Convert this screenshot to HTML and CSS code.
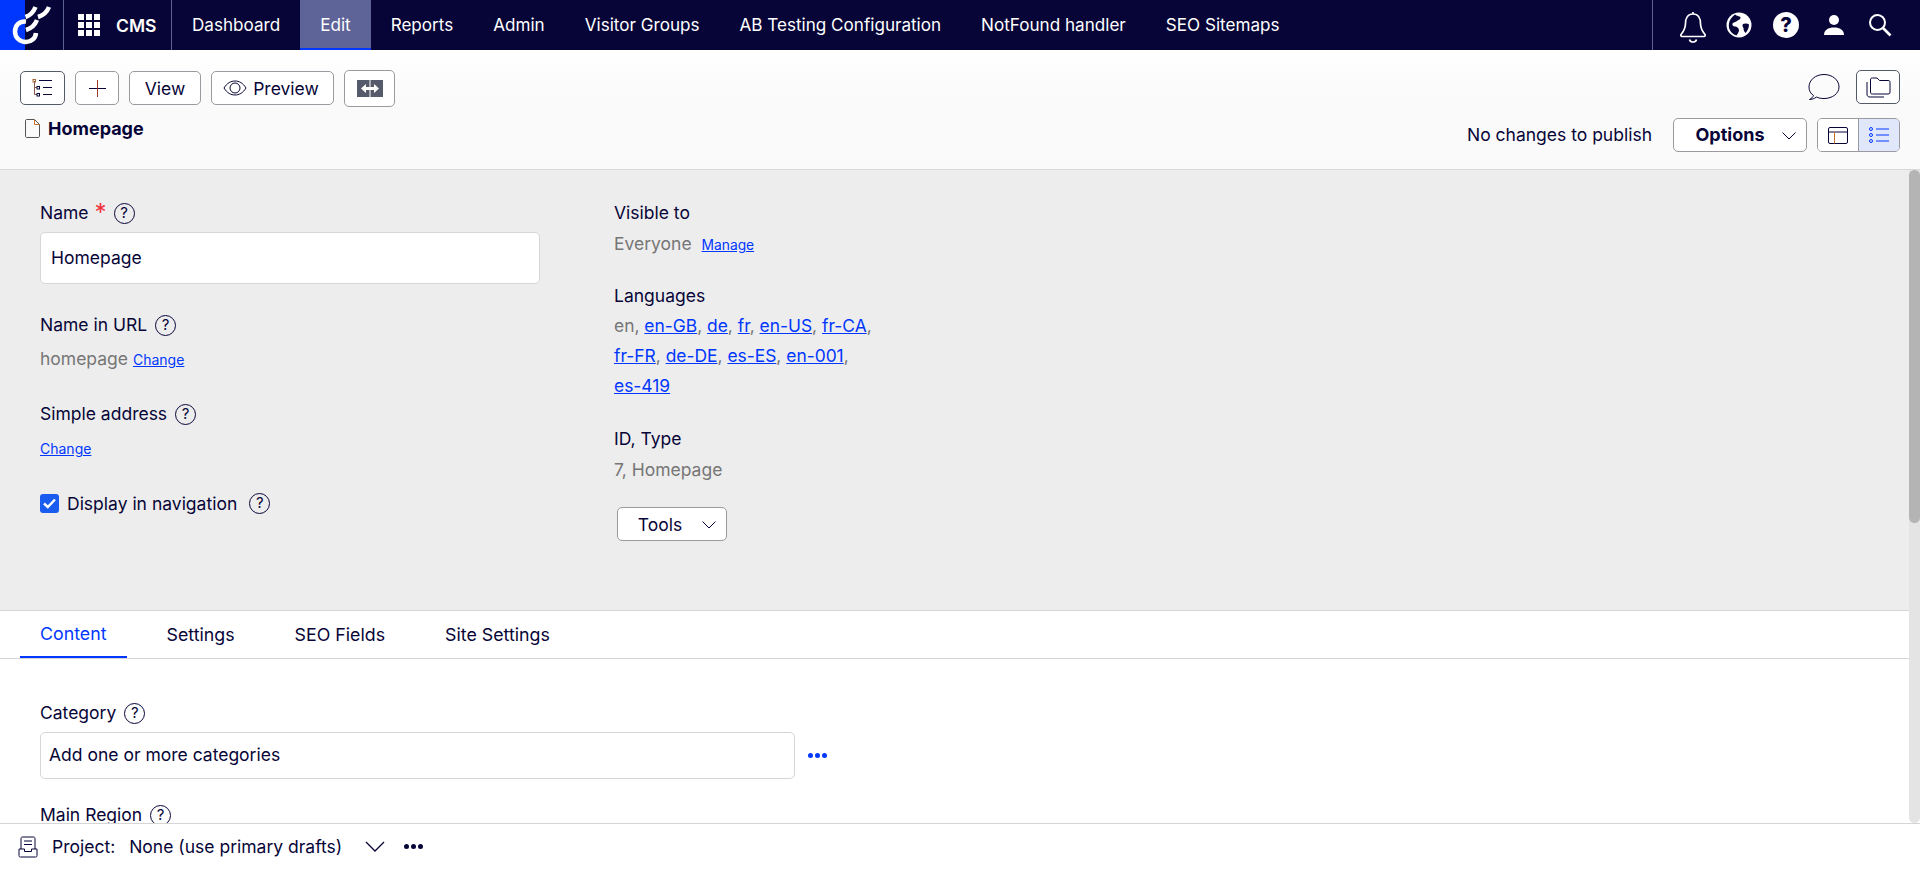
FILE: index.html
```html
<!DOCTYPE html>
<html>
<head>
<meta charset="utf-8">
<link rel="stylesheet" href="styles.css">
<title>CMS - Edit</title>
</head>
<body>

<!-- top nav -->
<div class="topbar">
	<div class="logo">
		<svg width="63" height="50" viewBox="0 0 63 50" fill="none" stroke="#fff" stroke-width="4.500">
			<path d="M26 21.5C19 21 15 25.5 15 31.500C15 38 20 42 26 42C31 42 35.500 38.500 36 33"/>
			<path d="M25.500 17C30 15.500 33.500 12 35.500 7"/>
			<path d="M38 17C43 15.500 47 12 49 7"/>
			<path d="M26 30C31 28.500 35 25 37 20"/>
		</svg>
	</div>
	<div class="apps">
		<div class="apps-grid"><i></i><i></i><i></i><i></i><i></i><i></i><i></i><i></i><i></i></div>
		<b>CMS</b>
	</div>
	<div class="nav">
		<a href="#">Dashboard</a>
		<a href="#" class="on">Edit</a>
		<a href="#">Reports</a>
		<a href="#">Admin</a>
		<a href="#">Visitor Groups</a>
		<a href="#">AB Testing Configuration</a>
		<a href="#">NotFound handler</a>
		<a href="#">SEO Sitemaps</a>
	</div>
	<div class="top-icons">
		<svg class="ic-bell" width="28" height="32" viewBox="0 0 28 32" fill="none" stroke="#fff" stroke-width="1.700" stroke-linejoin="round">
			<path d="M14 3C8.500 3 6.500 7.500 6.500 12.500C6.500 17.500 5 20 2 23.500C1.500 24.500 2 25.500 3 25.500H25C26 25.500 26.500 24.500 26 23.500C23 20 21.500 17.500 21.500 12.500C21.500 7.500 19.500 3 14 3Z"/>
			<path d="M14 3V1"/>
			<path d="M10.500 28.500C11 30.500 12.500 31 14 31C15.500 31 17 30.500 17.500 28.500"/>
		</svg>
		<svg class="ic-globe" width="26" height="26" viewBox="0 0 26 26">
			<circle cx="13" cy="13" r="12.500" fill="#fff"/>
			<path d="M9 2.500C11 4 13 4 14.500 5C15 7 12.500 8 11 9C9.500 10.500 7.500 10 6.500 11.500C6 13 7 14.500 9 14.500C11 14.500 12.500 16 13 18C13 20 11.500 22 10.500 23.500C7 22.500 4.500 20 3.200 16.500C2 11 4 6 9 2.500Z" fill="#070538"/>
			<path d="M17 12C19 11 21.500 11.500 23 12.500C23 16 21.500 19 19.500 21C18 19.500 17.500 18 17.500 16C16.500 15 16 13 17 12Z" fill="#070538"/>
		</svg>
		<div class="ic-help-solid">?</div>
		<svg class="ic-user" width="22" height="22" viewBox="0 0 22 22" fill="#fff">
			<circle cx="11" cy="6" r="5"/>
			<path d="M1 21C1 16 5 13.500 11 13.500C17 13.500 21 16 21 21Z"/>
		</svg>
		<svg class="ic-search" width="24" height="24" viewBox="0 0 24 24" fill="none" stroke="#fff">
			<circle cx="9.500" cy="9.500" r="7.500" stroke-width="2"/>
			<path d="M15 15L22.500 22.500" stroke-width="2.600"/>
		</svg>
	</div>
</div>

<!-- toolbar -->
<div class="toolbar">
	<div class="tb-left">
		<div class="tb-row">
			<button class="btn btn-tree">
				<svg width="22" height="20" viewBox="0 0 22 20" fill="none" stroke="#070538">
					<path d="M2.500 3V16.500H5M2.500 9.500H5" stroke="#8a5a48"/>
					<rect x="1" y="1.500" width="2.500" height="2.500" stroke="#a5673a"/>
					<rect x="5" y="8.500" width="2.500" height="2.500"/>
					<rect x="5" y="15.500" width="2.500" height="2.500"/>
					<path d="M7 2.500H20M11 9.500H20M11 16.500H20"/>
				</svg>
			</button>
			<button class="btn btn-add">
				<svg width="17" height="17" viewBox="0 0 17 17" fill="none">
					<path d="M0 8.500H17" stroke="#070538"/>
					<path d="M8.500 0V17" stroke="#9b3a2a"/>
				</svg>
			</button>
			<button class="btn btn-view">View</button>
			<button class="btn btn-preview">
				<svg width="24" height="16" viewBox="0 0 24 16" fill="none" stroke="#070538">
					<path d="M1 8C4 3 8 1 12 1C16 1 20 3 23 8C20 13 16 15 12 15C8 15 4 13 1 8Z"/>
					<circle cx="12" cy="8" r="5"/>
				</svg>
				Preview
			</button>
			<button class="btn btn-compare">
				<svg width="26" height="17" viewBox="0 0 26 17">
					<rect x="0" y="0" width="12.500" height="17" fill="#555b6a"/>
					<rect x="13.500" y="0" width="12.500" height="17" fill="#555b6a"/>
					<path d="M4 8.500L9 4V7H17V4L22 8.500L17 13V10H9V13Z" fill="#fff"/>
				</svg>
			</button>
		</div>
		<div class="page-title">
			<svg width="15" height="19" viewBox="0 0 15 19" fill="none" stroke="#555">
				<path d="M9.500 .5H2C1 .5 .5 1 .5 2V17C.5 18 1 18.500 2 18.500H13C14 18.500 14.500 18 14.500 17V5.500Z"/>
				<path d="M9.500 .5V5.500H14.500" stroke="#c8742a"/>
			</svg>
			<b>Homepage</b>
		</div>
	</div>
	<div class="tb-right">
		<div class="tb-row tb-row-right">
			<svg class="ic-comment" width="32" height="28" viewBox="0 0 32 28" fill="none" stroke="#070538">
				<path d="M1.500 26.500C3.500 25.500 5 24 5.500 22.500C2.500 20.500 1 17.500 1 14C1 7 7.500 1.500 16 1.500C24.500 1.500 31 7 31 14C31 20.500 24.500 25.500 16 25.500C13 25.500 10.500 25 8.500 24C6.500 25.500 4 26.500 1.500 26.500Z"/>
			</svg>
			<button class="btn btn-folder">
				<svg width="25" height="21" viewBox="0 0 25 21" fill="none" stroke="#070538">
					<path d="M1 5V17C1 19 2 20 4 20H18"/>
					<path d="M4.500 15V3C4.500 1.500 5 1 6.500 1H11L13.500 3.500H22C23.500 3.500 24 4 24 5.500V15C24 16.500 23.500 17 22 17H6.500C5 17 4.500 16.500 4.500 15Z"/>
				</svg>
			</button>
		</div>
		<div class="tb-row tb-row-right">
			<span class="publish-note">No changes to publish</span>
			<button class="btn btn-options">
				<b>Options</b>
				<svg class="chev" width="14" height="8" viewBox="0 0 14 8" fill="none" stroke="#070538"><path d="M.5 .5L7 7L13.500 .5"/></svg>
			</button>
			<div class="view-toggle">
				<button class="vt">
					<svg width="20" height="17" viewBox="0 0 20 17" fill="none" stroke="#070538">
						<rect x=".5" y=".5" width="19" height="16" rx="1.500"/>
						<path d="M.5 5H19.500"/>
						<path d="M6.500 5V16.500" stroke="#c8742a"/>
					</svg>
				</button>
				<button class="vt vt-on">
					<svg width="20" height="16" viewBox="0 0 20 16" fill="none" stroke="#0037ff">
						<circle cx="2" cy="2" r="1.500"/>
						<circle cx="2" cy="8" r="1.500"/>
						<circle cx="2" cy="14" r="1.500"/>
						<path d="M7 2H20M7 8H20M7 14H20"/>
					</svg>
				</button>
			</div>
		</div>
	</div>
</div>

<!-- main area -->
<div class="scroller">
	<div class="main">
		<div class="panel">
			<div class="col-left">
				<div class="label">Name <span class="req">*</span> <span class="help">?</span></div>
				<input class="name-input" type="text" value="Homepage">

				<div class="label label-url">Name in URL <span class="help">?</span></div>
				<div class="value"><span class="grey">homepage</span> <a class="small-link" href="#">Change</a></div>

				<div class="label label-simple">Simple address <span class="help">?</span></div>
				<div class="value"><a class="small-link" href="#">Change</a></div>

				<div class="check-row">
					<span class="check">
						<svg width="13" height="11" viewBox="0 0 13 11" fill="none" stroke="#fff" stroke-width="2.400"><path d="M1 5.500L4.800 9L12 1.500"/></svg>
					</span>
					<span>Display in navigation</span>
					<span class="help">?</span>
				</div>
			</div>

			<div class="col-right">
				<div class="label">Visible to</div>
				<div class="value value-near"><span class="grey">Everyone</span> <a class="small-link manage" href="#">Manage</a></div>

				<div class="label label-gap">Languages</div>
				<div class="langs">
					<span class="grey">en,</span> <a href="#">en-GB</a><span class="grey">,</span> <a href="#">de</a><span class="grey">,</span> <a href="#">fr</a><span class="grey">,</span> <a href="#">en-US</a><span class="grey">,</span> <a href="#">fr-CA</a><span class="grey">,</span>
					<a href="#">fr-FR</a><span class="grey">,</span> <a href="#">de-DE</a><span class="grey">,</span> <a href="#">es-ES</a><span class="grey">,</span> <a href="#">en-001</a><span class="grey">,</span>
					<a href="#">es-419</a>
				</div>

				<div class="label label-gap2">ID, Type</div>
				<div class="value value-type"><span class="grey">7, Homepage</span></div>

				<button class="btn btn-tools">
					Tools
					<svg class="chev" width="14" height="8" viewBox="0 0 14 8" fill="none" stroke="#070538"><path d="M.5 .5L7 7L13.500 .5"/></svg>
				</button>
			</div>
		</div>

		<div class="tabs">
			<a href="#" class="tab tab-on">Content</a>
			<a href="#" class="tab">Settings</a>
			<a href="#" class="tab">SEO Fields</a>
			<a href="#" class="tab">Site Settings</a>
		</div>

		<div class="content">
			<div class="label">Category <span class="help">?</span></div>
			<div class="cat-row">
				<div class="cat-input">Add one or more categories</div>
				<div class="dots dots-blue"><i></i><i></i><i></i></div>
			</div>
			<div class="label label-region">Main Region <span class="help">?</span></div>
		</div>
	</div>
	<div class="scrollbar"><div class="thumb"></div></div>
</div>

<!-- project bar -->
<div class="projectbar">
	<svg width="20" height="22" viewBox="0 0 20 22" fill="none" stroke="#070538">
		<path d="M3 13V2.500C3 1.500 3.500 1 4.500 1H15.500C16.500 1 17 1.500 17 2.500V13"/>
		<path d="M6 5H14M6 8.500H14"/>
		<path d="M1 13H6.500V15.500H13.500V13H19V19.500C19 20.500 18.500 21 17.500 21H2.500C1.500 21 1 20.500 1 19.500Z"/>
	</svg>
	<span class="proj-label">Project:</span>
	<span class="proj-value">None (use primary drafts)</span>
	<svg class="proj-chev" width="20" height="11" viewBox="0 0 20 11" fill="none" stroke="#070538" stroke-width="1.300"><path d="M1 1L10 10L19 1"/></svg>
	<div class="dots"><i></i><i></i><i></i></div>
</div>

</body>
</html>
```

FILE: styles.css
```css
*{box-sizing:border-box;}
html,body{margin:0; height:100%; overflow:hidden;}
body{
	display:flex;
	flex-direction:column;
	height:869px;
	font-family:"Inter","Liberation Sans",sans-serif;
	font-size:17.5px;
	color:#070538;
	background:#fff;
}
a{color:#0037ff;}
button{font-family:inherit; color:inherit; cursor:pointer;}

/* top nav */
.topbar{
	display:flex;
	flex:none;
	height:50px;
	background:#070538;
	color:#fff;
}
.logo{
	flex:none;
	width:64px;
	height:50px;
	background:linear-gradient(to right,#0037ff 25px,#070538 25px);
	border-right:1px solid #5f6390;
}
.logo svg{display:block;}
.apps{
	display:flex;
	align-items:center;
	flex:none;
	width:108px;
	padding-left:14px;
	border-right:1px solid #5f6390;
}
.apps b{margin-left:18px; font-weight:600; font-size:17.5px;}
.apps-grid{
	display:grid;
	grid-template-columns:repeat(3,6px);
	grid-auto-rows:6px;
	gap:2px;
	width:20px;
}
.apps-grid i{background:#fff;}
.nav{display:flex; flex:1;}
.nav a{
	display:flex;
	align-items:center;
	height:50px;
	padding:0 20px;
	color:#fff;
	text-decoration:none;
	font-size:17.1px;
	font-weight:400;
	border-bottom:2px solid transparent;
}
.nav a.on{background:#5e6398; border-bottom-color:#0037ff;}
.top-icons{
	display:flex;
	align-items:center;
	flex:none;
	width:268px;
	padding-left:26px;
	gap:20px;
	border-left:1px solid #5f6390;
}
.ic-bell{margin-top:3px;}
.ic-globe{margin-left:-1px;}
.ic-help-solid{
	width:26px;
	height:26px;
	margin-left:1px;
	border-radius:50%;
	background:#fff;
	color:#070538;
	font-weight:800;
	font-size:20px;
	line-height:26px;
	text-align:center;
}
.ic-user{margin-left:4px;}
.ic-search{margin-left:3px;}

/* toolbar */
.toolbar{
	display:flex;
	justify-content:space-between;
	flex:none;
	height:120px;
	padding:21px 20px 0 20px;
	background:linear-gradient(#fff,#fafafa 40%);
	border-bottom:1px solid #d9d9d9;
}
.tb-row{display:flex; align-items:center; gap:10px;}
.tb-row-right{justify-content:flex-end;}
.btn{
	display:inline-flex;
	align-items:center;
	justify-content:center;
	height:34px;
	padding:0;
	background:#fff;
	border:1px solid #9a9aa0;
	border-radius:5px;
	font-size:17.5px;
}
.btn-tree{width:45px; border-color:#555a68;}
.btn-add{width:44px;}
.btn-view{width:72px;}
.btn-preview{width:123px; gap:6px; padding-right:3px;}
.btn-compare{width:51px; height:37px; margin-top:-1px; margin-bottom:-2px;}
.page-title{
	display:flex;
	align-items:center;
	gap:8px;
	margin:13px 0 0 5px;
	font-size:18px;
}
.page-title b{font-weight:700;}

.tb-right{margin-top:-1px;}
.ic-comment{margin-right:6px; margin-left:2px;}
.btn-folder{width:44px; border-color:#555a68;}
.tb-right .tb-row + .tb-row{margin-top:14px;}
.publish-note{margin-right:11px; padding-bottom:2px;}
.btn-options{width:134px; position:relative; padding:0 20px 2px 0; font-size:18px;}
.btn-options b{font-weight:700;}
.btn-options .chev{position:absolute; right:10px; top:13px;}
.view-toggle{
	display:flex;
	height:34px;
	width:83px;
	border:1px solid #9a9aa0;
	border-radius:5px;
	overflow:hidden;
}
.vt{
	display:flex;
	align-items:center;
	justify-content:center;
	flex:1;
	padding:0;
	background:#fff;
	border:0;
}
.vt-on{background:#e1e7fb; border-left:1px solid #9a9aa0;}

/* main area */
.scroller{display:flex; flex:1; min-height:0;}
.main{flex:1; min-width:0; overflow:hidden;}
.scrollbar{
	flex:none;
	width:11px;
	background:#e4e4e4;
	border-radius:0 0 6px 6px;
}
.thumb{height:353px; background:#b4b4b4; border-radius:6px;}

.panel{
	display:flex;
	height:441px;
	padding:32px 0 0 40px;
	background:#ededed;
	border-bottom:1px solid #d5d5d5;
}
.col-left{flex:none; width:500px;}
.col-right{flex:none; width:270px; margin-left:74px;}

.label{display:flex; align-items:center; height:22px; line-height:22px;}
.req{color:#f0303a; font-size:24px; line-height:22px; height:22px; margin-left:6px;}
.req + .help{margin-left:7px;}
.help{
	display:inline-block;
	flex:none;
	width:21px;
	height:21px;
	margin-left:8px;
	border:1.500px solid #070538;
	border-radius:50%;
	font-size:15px;
	line-height:18px;
	text-align:center;
}
.grey{color:#767676;}
.value{display:block; height:22px; line-height:22px;}
.small-link{font-size:14px;}

.name-input{
	display:block;
	width:500px;
	height:52px;
	margin-top:8px;
	padding:0 10px 2px;
	background:#fff;
	border:1px solid #d6d6d6;
	border-radius:5px;
	font-family:inherit;
	font-size:17.5px;
	color:#070538;
}
.label-url{margin-top:30px;}
.label-url + .value{margin-top:12px;}
.label-simple{margin-top:33px;}
.label-simple + .value{margin-top:12px;}

.check-row{
	display:flex;
	align-items:center;
	height:22px;
	margin-top:33px;
}
.check{
	display:flex;
	align-items:center;
	justify-content:center;
	flex:none;
	width:19px;
	height:19px;
	margin-right:8px;
	background:#1a5cf0;
	border-radius:3px;
}
.check-row .help{margin-left:12px;}

.value-near{margin-top:9px;}
.value-type{margin-top:9px;}
.manage{margin-left:5px; font-size:13.8px;}
.label-gap{margin-top:30px;}
.langs{margin-top:4px; font-size:17.4px; line-height:30px;}
.langs a{white-space:nowrap;}
.label-gap2{margin-top:27px;}
.btn-tools{
	position:relative;
	width:110px;
	margin:26px 0 0 3px;
	padding-right:24px;
}
.btn-tools .chev{position:absolute; right:10px; top:13px;}

/* tabs */
.tabs{
	display:flex;
	gap:20px;
	height:48px;
	padding-left:20px;
	border-bottom:1px solid #d5d5d5;
}
.tab{
	display:flex;
	align-items:center;
	height:47px;
	padding:2px 20px 0;
	color:#070538;
	font-size:17.8px;
	text-decoration:none;
	border-bottom:2px solid transparent;
}
.tab-on{color:#0037ff; padding-top:0; border-bottom-color:#0037ff;}

.content{padding:43px 0 0 40px;}
.cat-row{display:flex; align-items:center; margin-top:8px;}
.cat-input{
	display:flex;
	align-items:center;
	width:755px;
	height:47px;
	padding:0 0 2px 8px;
	border:1px solid #d6d6d6;
	border-radius:5px;
}
.dots{display:flex; gap:2px;}
.dots i{width:5px; height:5px; border-radius:50%; background:#070538;}
.dots-blue{margin-left:13px;}
.dots-blue i{background:#0037ff;}
.label-region{margin-top:25px;}

/* project bar */
.projectbar{
	display:flex;
	align-items:center;
	flex:none;
	height:46px;
	padding-left:18px;
	background:#fff;
	border-top:1px solid #d5d5d5;
}
.proj-label{margin-left:14px;}
.proj-value{margin-left:14px;}
.proj-chev{margin-left:23px;}
.projectbar .dots{margin-left:19px;}
```
